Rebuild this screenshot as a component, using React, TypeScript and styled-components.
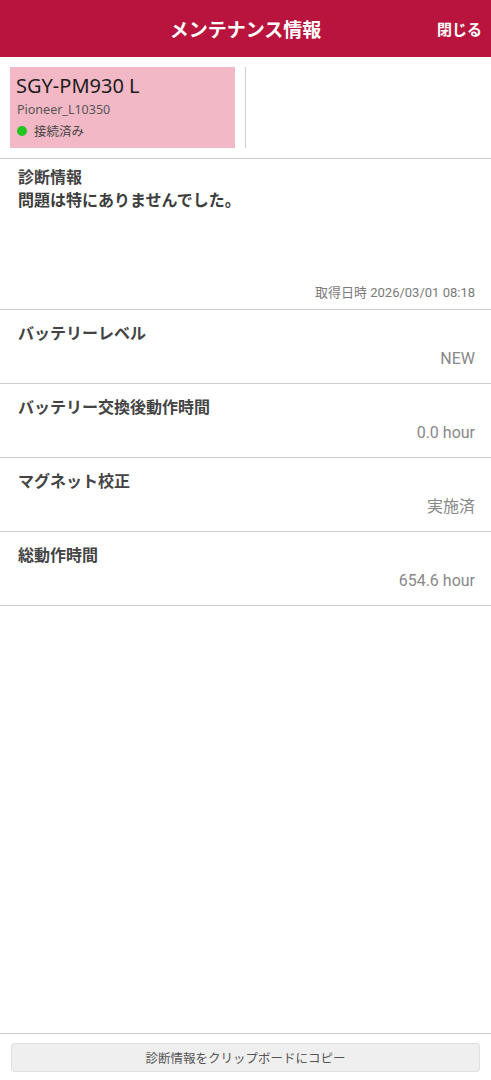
import React from "react";
import styled, {createGlobalStyle} from "styled-components";

const GlobalStyle = createGlobalStyle`
    html, body {
        margin: 0;
        padding: 0;
        background: #fff;
    }
    body {
        font-family: "Noto Sans", "Noto Sans CJK JP", sans-serif;
    }
`;

const Page = styled.div`
    display: flex;
    flex-direction: column;
    min-height: 100vh;
`;

const Header = styled.header`
    align-items: center;
    background-color: #b8143d;
    color: #fff;
    display: grid;
    grid-template-columns: 70px 1fr 70px;
    height: 57px;
`;

const Title = styled.h1`
    font-family: "Noto Sans CJK JP", sans-serif;
    font-size: 19px;
    font-weight: 700;
    grid-column: 2;
    margin: 0;
    text-align: center;
`;

const CloseButton = styled.button`
    background: none;
    border: none;
    color: #fff;
    font-family: "Noto Sans CJK JP", sans-serif;
    font-size: 15px;
    font-weight: 700;
    justify-self: end;
    padding: 0 9px 0 0;
`;

const DeviceStrip = styled.div`
    border-bottom: 1px solid #cfcfcf;
    display: flex;
    flex-direction: row;
    padding: 10px 10px 10px;
`;

const DeviceCard = styled.div`
    background-color: #f3b8c6;
    box-sizing: border-box;
    display: flex;
    flex-direction: column;
    height: 81px;
    padding: 6px 6px 0;
    width: 225px;
`;

const DeviceName = styled.div`
    color: #1c1c1c;
    font-size: 20px;
    line-height: 26px;
`;

const DeviceId = styled.div`
    color: #555;
    font-size: 12.5px;
    line-height: 16px;
    margin-top: 3px;
    padding-left: 1px;
`;

const Status = styled.div`
    align-items: center;
    color: #444;
    display: flex;
    font-family: "Noto Sans CJK JP", sans-serif;
    font-size: 12.5px;
    gap: 7px;
    line-height: 16px;
    margin-top: 5px;
    padding-left: 1px;
`;

const Dot = styled.span`
    background-color: #22c41f;
    border-radius: 50%;
    display: inline-block;
    height: 10px;
    width: 10px;
`;

const Divider = styled.div`
    background-color: #d0d0d0;
    margin-left: 10px;
    width: 1px;
`;

const Diagnosis = styled.section`
    border-bottom: 1px solid #cfcfcf;
    box-sizing: border-box;
    display: flex;
    flex-direction: column;
    height: 151px;
    padding: 7px 16px 0 18px;
`;

const Label = styled.div`
    color: #444;
    font-family: "Noto Sans CJK JP", sans-serif;
    font-size: 16px;
    font-weight: 700;
    line-height: 21px;
`;

const Message = styled.div`
    color: #3d3d3d;
    font-family: "Noto Sans CJK JP", sans-serif;
    font-size: 16px;
    font-weight: 700;
    line-height: 22px;
    margin-top: 1px;
`;

const Timestamp = styled.div`
    color: #7a7a7a;
    font-family: Roboto, "Noto Sans CJK JP", sans-serif;
    font-size: 13px;
    line-height: 16px;
    margin-bottom: 8px;
    margin-top: auto;
    text-align: right;
`;

const Row = styled.section`
    border-bottom: 1px solid #cfcfcf;
    box-sizing: border-box;
    display: flex;
    flex-direction: column;
    height: 74px;
    padding: 12px 16px 0 18px;
`;

const Value = styled.div`
    color: #888;
    font-family: Roboto, "Noto Sans CJK JP", sans-serif;
    font-size: 16px;
    line-height: 20px;
    margin-top: 6px;
    text-align: right;
`;

const Spacer = styled.div`
    flex-grow: 1;
`;

const Footer = styled.footer`
    border-top: 1px solid #cfcfcf;
    padding: 9px 11px 8px;
`;

const CopyButton = styled.button`
    background-color: #efefef;
    border: 1px solid #e0e0e0;
    border-radius: 3px;
    color: #555;
    font-family: "Noto Sans CJK JP", sans-serif;
    font-size: 12.5px;
    height: 29px;
    width: 100%;
`;

const items = [
    {label: "バッテリーレベル", value: "NEW"},
    {label: "バッテリー交換後動作時間", value: "0.0 hour"},
    {label: "マグネット校正", value: "実施済"},
    {label: "総動作時間", value: "654.6 hour"},
];

export default function App() {
    return (
        <Page>
            <GlobalStyle />
            <Header>
                <Title>メンテナンス情報</Title>
                <CloseButton>閉じる</CloseButton>
            </Header>
            <DeviceStrip>
                <DeviceCard>
                    <DeviceName>SGY-PM930 L</DeviceName>
                    <DeviceId>Pioneer_L10350</DeviceId>
                    <Status>
                        <Dot />
                        接続済み
                    </Status>
                </DeviceCard>
                <Divider />
            </DeviceStrip>
            <Diagnosis>
                <Label>診断情報</Label>
                <Message>問題は特にありませんでした。</Message>
                <Timestamp>取得日時 2026/03/01 08:18</Timestamp>
            </Diagnosis>
            {items.map((item) => (
                <Row key={item.label}>
                    <Label>{item.label}</Label>
                    <Value>{item.value}</Value>
                </Row>
            ))}
            <Spacer />
            <Footer>
                <CopyButton>診断情報をクリップボードにコピー</CopyButton>
            </Footer>
        </Page>
    );
}
